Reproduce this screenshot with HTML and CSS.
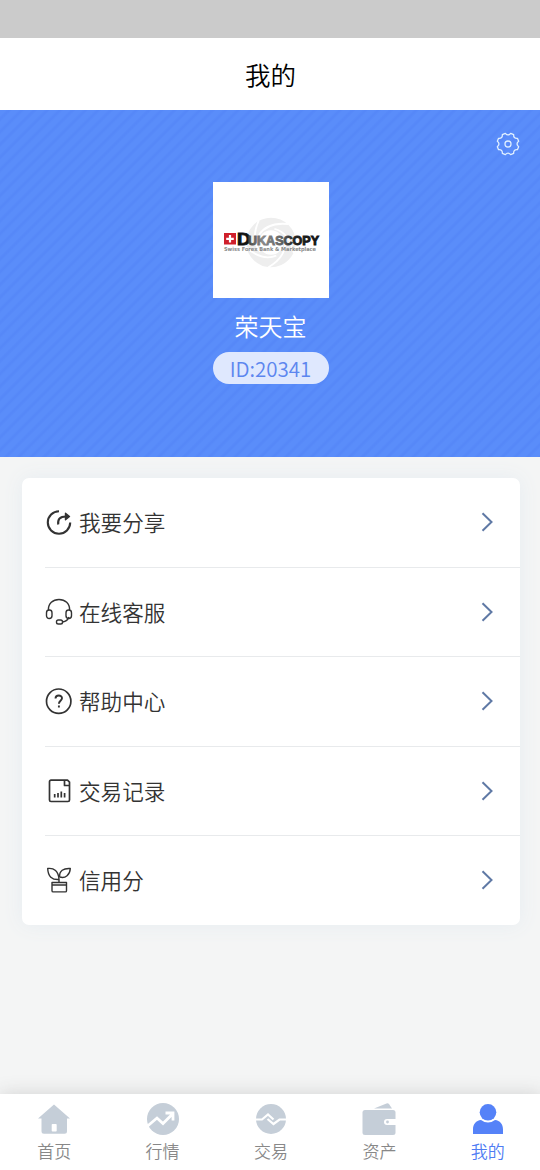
FILE: index.html
```html
<!DOCTYPE html>
<html lang="zh-CN">
<head>
<meta charset="utf-8">
<title>我的</title>
<link rel="stylesheet" href="styles.css">
</head>
<body>
<div class="app">
  <div class="status"></div>
  <header class="title">我的</header>
  <section class="hero">
    <svg class="gear" viewBox="-12 -12 24 24"><path d="M10.67-2.66Q7.4 0 10.67 2.66L9.43 5.67Q5.3 5.3 5.67 9.43L2.66 10.67Q0 7.4-2.66 10.67L-5.67 9.43Q-5.3 5.3-9.43 5.67L-10.67 2.66Q-7.4 0-10.67-2.66L-9.43-5.67Q-5.3-5.3-5.67-9.43L-2.66-10.67Q0-7.4 2.66-10.67L5.67-9.43Q5.3-5.3 9.43-5.67Z"/><circle r="3"/></svg>
    <svg class="avatar" viewBox="0 0 116 116">
      <defs><linearGradient id="ink"><stop offset="0" stop-color="#444"/><stop offset=".2" stop-color="#888"/><stop offset=".45" stop-color="#666"/><stop offset=".65" stop-color="#222"/><stop offset="1" stop-color="#111"/></linearGradient></defs>
      <rect width="116" height="116" fill="#fff"/>
      <circle cx="58" cy="60.500" r="18.500" fill="none" stroke="#eee" stroke-width="12.500"/>
      <g fill="none" stroke="#fff" stroke-width="1.800">
        <path id="blade" d="M46 53Q54 40 75 42"/>
        <use href="#blade" transform="rotate(72 58 60.500)"/><use href="#blade" transform="rotate(144 58 60.500)"/><use href="#blade" transform="rotate(216 58 60.500)"/><use href="#blade" transform="rotate(288 58 60.500)"/>
      </g>
      <rect x="11" y="51" width="12" height="11.500" fill="#cf1f2b"/>
      <path d="M17 53v7.500M13.200 56.800h7.600" stroke="#fff" stroke-width="2.200"/>
      <text class="brand" x="24" y="63" textLength="13.500" lengthAdjust="spacingAndGlyphs" font-size="16.500" fill="#111" stroke="#111">D</text>
      <text class="brand" x="35" y="62.700" textLength="71" lengthAdjust="spacingAndGlyphs" font-size="12.800" fill="url(#ink)" stroke="url(#ink)">UKASCOPY</text>
      <text class="tagline" x="11" y="69" textLength="92" lengthAdjust="spacingAndGlyphs">Swiss Forex Bank &amp; Marketplace</text>
    </svg>
    <div class="name">荣天宝</div>
    <div class="uid">ID:20341</div>
  </section>
  <main class="card">
    <a class="row"><svg class="ico" viewBox="0 0 28 28"><path class="share" d="M14 3.300A11.200 11.200 0 1 0 25.200 14.500M13.200 16.500C12.500 11 15 8.500 21 8.500"/><path d="M20.500 5.300L24.500 8.500L20.500 11.700Z" class="solid"/></svg><span>我要分享</span><svg class="go" viewBox="0 0 12 20"><path d="M1.500 1.200L10.500 10L1.500 18.800"/></svg></a>
    <a class="row"><svg class="ico" viewBox="0 0 28 28"><path d="M3.500 12C3 5.500 8 1.500 14 1.500S25 5.500 24.500 12M24 19C23 22 20.500 23.500 17.500 24"/><rect x="1.500" y="12" width="5.500" height="8.500" rx="2.700"/><rect x="21" y="12" width="5.500" height="8.500" rx="2.700"/><rect x="11.500" y="22" width="6" height="4" rx="1.800"/></svg><span>在线客服</span><svg class="go" viewBox="0 0 12 20"><path d="M1.500 1.200L10.500 10L1.500 18.800"/></svg></a>
    <a class="row"><svg class="ico" viewBox="0 0 28 28"><circle class="mid" cx="13.700" cy="14.200" r="12.200"/><path class="mark" d="M10.500 11.500C10.500 7.400 17.200 7.600 17 11.300C16.900 13.700 13.900 13.900 13.900 16.700M13.900 18.400V20.400"/></svg><span>帮助中心</span><svg class="go" viewBox="0 0 12 20"><path d="M1.500 1.200L10.500 10L1.500 18.800"/></svg></a>
    <a class="row"><svg class="ico" viewBox="0 0 28 28"><path class="mid" d="M19.500 3.200H6A1.500 1.500 0 0 0 4.500 4.700V23A1.500 1.500 0 0 0 6 24.500H23A1.500 1.500 0 0 0 24.500 23V8.500H19.500ZM19.500 3.200H22.500L24.500 5.200V8.500"/><path class="mid" d="M9.700 17V20.500M13 16V20.500M16.300 14.500V20.500M19.600 16V20.500"/></svg><span>交易记录</span><svg class="go" viewBox="0 0 12 20"><path d="M1.500 1.200L10.500 10L1.500 18.800"/></svg></a>
    <a class="row"><svg class="ico" viewBox="0 0 28 28"><path d="M14 13.500C7 14 3 10.500 2.700 2.500C9 1.700 13.500 5 14 13.500ZM14.700 11C14 5 18.500 2 25.300 2.500C25 8.700 20.500 12.800 14.700 11M14 12.500V16.500M7 16.500H21.500V24.700a1.200 1.200 0 0 1-1.200 1.200H8.200A1.200 1.200 0 0 1 7 24.700ZM7 19H21.500"/></svg><span>信用分</span><svg class="go" viewBox="0 0 12 20"><path d="M1.500 1.200L10.500 10L1.500 18.800"/></svg></a>
  </main>
  <nav class="tabs">
    <a class="tab"><svg viewBox="0 0 36 36"><path d="M18 2.500L34 16.500H31V29.200a2.500 2.500 0 0 1-2.500 2.500H8A2.500 2.500 0 0 1 5.500 29.200V16.500H2Z"/><rect class="cut" x="15.700" y="22" width="5" height="7.500" rx=".8"/></svg><span>首页</span></a>
    <a class="tab"><svg viewBox="0 0 36 36"><circle cx="18" cy="17" r="16"/><path class="line thick" d="M2 24.500L12 16L18 21.500L27 12.500M20.500 11H28V18.500"/></svg><span>行情</span></a>
    <a class="tab"><svg viewBox="0 0 36 36"><circle cx="18" cy="17" r="15"/><path class="line" d="M2 17.500H9L15 12.500L20.500 17.500M14.500 17L20.500 22L26.500 17.500H34"/></svg><span>交易</span></a>
    <a class="tab"><svg viewBox="0 0 36 36"><path d="M13 6.500L25.500 1.500Q27 1 28 2L31 6.500Z"/><rect x="1.500" y="8" width="33" height="25" rx="2.500"/><path class="cut" d="M35 17H26a3 3 0 0 0 0 6H35Z"/><circle cx="26.500" cy="20" r="1.400"/></svg><span>资产</span></a>
    <a class="tab active"><svg viewBox="0 0 36 36"><circle cx="18" cy="10.300" r="8.300"/><path d="M3 32V27.500C3 22 6 18.500 11 18Q18 23 25 18C30 18.500 33 22 33 27.500V32Z"/></svg><span>我的</span></a>
  </nav>
</div>
</body>
</html>
```

FILE: styles.css
```css
* { box-sizing: border-box; }
body { margin: 0; font-family: "Noto Sans CJK SC", sans-serif; font-weight: 350; }
.app { height: 1170px; display: flex; flex-direction: column; background: #f4f5f5; overflow: hidden; }
.status { height: 38px; background: #cbcbcb; flex: none; }
.title { height: 71.500px; flex: none; display: flex; align-items: center; justify-content: center; padding: 0 0 1px 1px; background: #fff; color: #000; font-size: 25.500px; }
.hero {
  position: relative; height: 347px; flex: none; display: flex; flex-direction: column; align-items: center;
  padding: 72px 0 0 1px; color: #fff;
  background: repeating-linear-gradient(135deg, #5a8dfa 0, #5a8dfa 4px, #5688f8 6px, #5688f8 7px, #5a8dfa 9px);
}
.gear { position: absolute; top: 22px; right: 20px; width: 24px; height: 24px; fill: none; stroke: #e0f0ff; stroke-width: 1.300; stroke-linejoin: round; }
.avatar { width: 116px; height: 116px; flex: none; }
.brand { font-family: "Liberation Sans", sans-serif; font-weight: 700; stroke-width: .9px; }
.tagline { font-family: "DejaVu Sans", sans-serif; font-weight: 700; font-size: 5.500px; fill: #888; }
.name { margin-top: 10px; font-size: 24px; line-height: 36px; }
.uid { margin-top: 8px; width: 116px; height: 32px; border-radius: 16px; background: #dfe8fe; color: #5c86ef; font-size: 20.500px; line-height: 33px; text-align: center; }
.card { margin: 21.500px 20px 0 21.500px; border-radius: 7px; background: #fff; box-shadow: 0 0 20px #e6ecf1; }
.row { display: flex; align-items: center; height: 89.500px; margin-left: 23px; padding-right: 27px; color: #333; font-size: 21.600px; border-bottom: 1px solid #e8eaec; }
.row:last-child { border-bottom: 0; height: 88.500px; }
.row span { flex: 1; margin: -1px 0 0 6.500px; }
.ico { width: 28px; height: 28px; fill: none; stroke: #333; stroke-width: 1.400; stroke-linejoin: round; }
.ico .mid { stroke-width: 1.700; }
.ico .mark { stroke-width: 1.900; }
.ico .share { stroke-width: 2.100; }
.ico .solid { fill: #333; }
.go { width: 12px; height: 20px; fill: none; stroke: #5f79a5; stroke-width: 2; }
.tabs { height: 76px; margin: auto -2px 0 0; display: flex; background: #fff; box-shadow: 0 0 18px #d2d2d2; }
.tab { flex: 1; display: flex; flex-direction: column; align-items: center; padding-top: 8px; color: #888; font-size: 17px; line-height: 25px; }
.tab svg { width: 36px; height: 36px; fill: #c5ced8; }
.tab .cut { fill: #fff; }
.tab .line { fill: none; stroke: #fff; stroke-width: 2.200; }
.tab .thick { stroke-width: 2.800; }
.active { color: #4e7cf3; }
.active svg { fill: #5582f8; }
```
